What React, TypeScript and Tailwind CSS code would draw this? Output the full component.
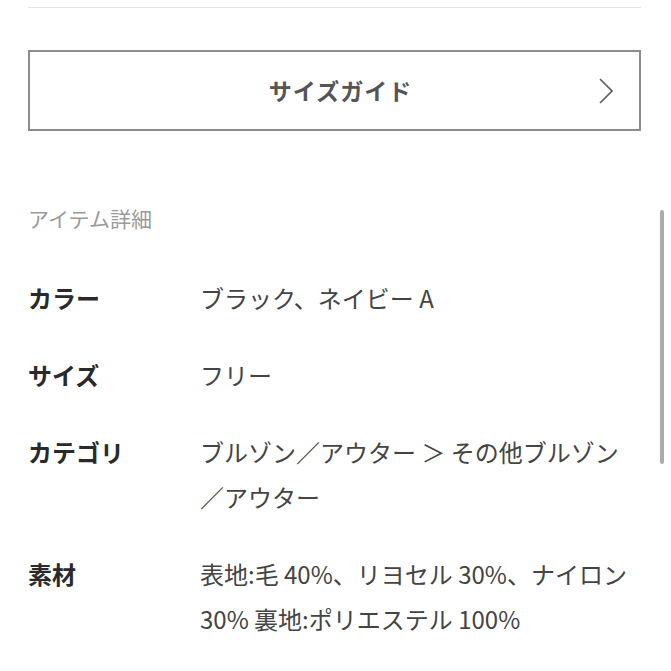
const rows = [
  { label: 'カラー', lines: ['ブラック、ネイビー A'] },
  { label: 'サイズ', lines: ['フリー'] },
  { label: 'カテゴリ', lines: ['ブルゾン／アウター ＞ その他ブルゾン', '／アウター'] },
  { label: '素材', lines: ['表地:毛 40%、リヨセル 30%、ナイロン', '30% 裏地:ポリエステル 100%'] },
]

export default function App() {
  return (
    <main
      className="relative w-[671px] h-[671px] overflow-hidden bg-white pl-[28px] pr-[30px]"
      style={{ fontFamily: '"Noto Sans CJK JP", "Noto Sans", sans-serif' }}
    >
      <div className="h-[8px] border-b border-[#e2e2e2]" />

      <button
        type="button"
        className="relative mt-[42px] flex h-[81px] w-full items-center justify-center border-2 border-[#8c8c8c] bg-white pl-[12px]"
      >
        <span className="text-[23px] font-bold tracking-[1px] text-[#555]">サイズガイド</span>
        <svg
          className="absolute right-[26px] top-1/2 -translate-y-1/2"
          width="14"
          height="26"
          viewBox="0 0 14 26"
          fill="none"
          stroke="#5e5e5e"
          strokeWidth="1.6"
        >
          <polyline points="1,1 13,13 1,25" />
        </svg>
      </button>

      <h2 className="mt-[72px] text-[21px] leading-[30px] text-[#9a9a9a]">アイテム詳細</h2>

      <dl className="mt-[42px] flex flex-col gap-[32px]">
        {rows.map((r) => (
          <div key={r.label} className="flex">
            <dt className="w-[172px] shrink-0 text-[24px] font-bold leading-[45px] text-[#2a2a2a]">{r.label}</dt>
            <dd className="text-[24px] leading-[45px] text-[#444]">
              {r.lines.map((l) => (
                <div key={l} className="whitespace-nowrap">{l}</div>
              ))}
            </dd>
          </div>
        ))}
      </dl>

      <div className="absolute right-[7px] top-[210px] h-[254px] w-[4px] rounded-full bg-[#ababab]" />
    </main>
  )
}
